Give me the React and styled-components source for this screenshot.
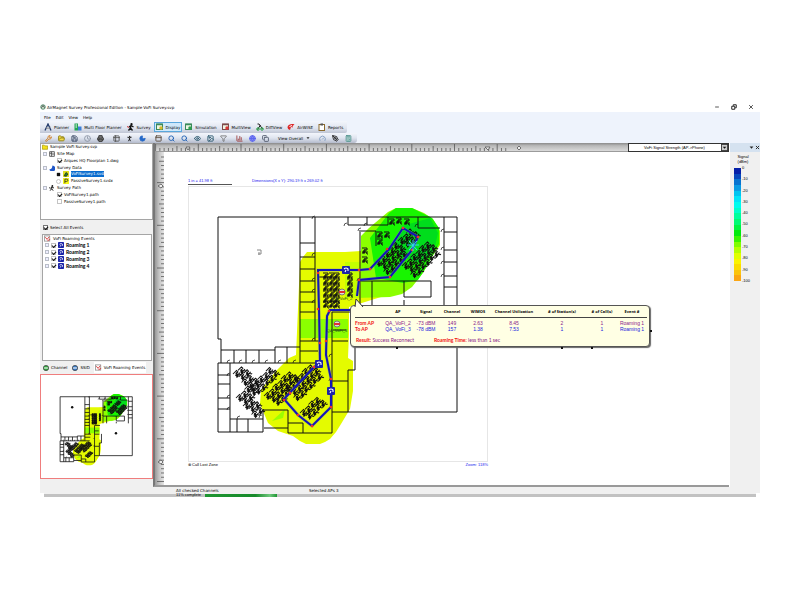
import React from 'react';
import styled, { createGlobalStyle } from 'styled-components';
import {
    Wrench, FolderOpen, Save, Clock, Printer, Table2, PersonStanding, Moon, PanelTop,
    Search, Eye, Image, Filter, BarChart3, Globe, Copy, Gauge, PenTool, Calculator
} from 'lucide-react';

const GlobalStyle = createGlobalStyle`
    body {
        margin: 0;
        background: #fff;
        font-family: 'DejaVu Sans', sans-serif;
        font-size: 4px;
        line-height: 7px;
        color: #000;
    }
    * {
        box-sizing: border-box;
    }
    button, select, input {
        font: inherit;
        color: inherit;
        margin: 0;
        padding: 0;
    }
`;

const Page = styled.main`
    padding: 100px 40px 20px;
`;

const AppWindow = styled.div`
    display: flex;
    flex-direction: column;
    background: #fff;
`;

const TitleBar = styled.header`
    display: flex;
    align-items: center;
    height: 12px;
    padding: 2px 6px 0 0;
    gap: 1px;
`;

const Title = styled.h1`
    margin: 0;
    font-size: 4px;
    font-weight: 400;
    flex: 1;
`;

const WindowButtons = styled.div`
    display: flex;
    gap: 11px;
`;

const PlainButton = styled.button`
    display: flex;
    align-items: center;
    justify-content: center;
    border: none;
    background: none;
    height: 6px;
    min-width: 6px;
`;

const Ribbon = styled.div`
    background: #eef3fc;
    height: 31px;
`;

const MenuBar = styled.nav`
    display: flex;
    align-items: center;
    height: 9px;
    padding: 1px 0 0 4px;
    gap: 5px;
`;

const TabBar = styled.div`
    display: flex;
    align-items: center;
    width: fit-content;
    height: 12px;
    padding: 1px 2px;
    gap: 1px;
    background: linear-gradient(#f3f6fc, #dfe4ef 60%, #bfc5d4);
    border-radius: 0 0 2px 0;
`;

const Tab = styled.button`
    display: flex;
    align-items: center;
    gap: 2px;
    height: 10px;
    padding: 0 1px;
    white-space: nowrap;
    border: 1px solid ${props => props.$active ? '#5aa7dc' : 'transparent'};
    background: ${props => props.$active ? '#cfe8fa' : 'none'};
`;

const ToolBar = styled.div`
    display: flex;
    align-items: center;
    width: fit-content;
    height: 10px;
    padding: 0 5px;
    gap: 9px;
    background: linear-gradient(#f3f6fc, #dfe4ef 50%, #b4bbcc);
    border-radius: 0 0 3px 0;
`;

const ToolGroup = styled.div`
    display: flex;
    gap: 6px;
`;

const Tool = styled.button`
    display: flex;
    align-items: center;
    gap: 3px;
    height: 8px;
    min-width: 7px;
    border: none;
    background: none;
    white-space: nowrap;
`;

const Body = styled.div`
    display: grid;
    grid-template-columns: 113px 1fr 31px;
`;

const Sidebar = styled.aside`
    display: flex;
    flex-direction: column;
    background: #f0f0f0;
`;

const TreePanel = styled.section`
    height: ${props => props.$height};
    margin: ${props => props.$margin || '0'};
    padding: 0 1px;
    background: #fff;
    border: 1px solid #a5a5a5;
`;

const TreeRows = styled.ul`
    list-style: none;
    margin: 0;
    padding: 0;
    display: grid;
    grid-auto-rows: 1fr;
    height: ${props => props.$height};
`;

const TreeRow = styled.li`
    display: flex;
    align-items: center;
    gap: 2px;
    padding-left: ${props => props.$indent}px;
    font-weight: ${props => props.$bold ? 700 : 400};
    font-family: ${props => props.$bold ? "'Lato', sans-serif" : 'inherit'};
    font-size: ${props => props.$bold ? 5 : 4}px;
    line-height: 6px;
    white-space: nowrap;
`;

const Label = styled.label`
    display: flex;
    align-items: center;
    gap: 2px;
`;

const Name = styled.span`
    background: ${props => props.$selected ? '#0a6cce' : 'none'};
    color: ${props => props.$selected ? '#fff' : 'inherit'};
`;

const Check = styled.input`
    appearance: none;
    width: 5px;
    height: 5px;
    border: 1px solid ${props => props.$boxed ? '#777' : '#c4c4c4'};
    border-radius: ${props => props.type === 'radio' ? '50%' : '0'};
    background: #fff;
    display: grid;
    place-items: center;

    &:checked::after {
        content: '';
        width: 3px;
        height: 2px;
        border-left: 1px solid #111;
        border-bottom: 1px solid #111;
        transform: rotate(-45deg);
    }
    &[type='radio']:checked::after {
        border: none;
        width: 3px;
        height: 3px;
        background: #111;
        transform: none;
    }
`;

const Expander = styled.i`
    width: 4px;
    height: 4px;
    border: 1px solid #b9bec8;
    background: #eef;
`;

const SelectAll = styled.div`
    display: flex;
    align-items: center;
    height: 14px;
    padding-left: 3px;
`;

const EventTabs = styled.div`
    display: flex;
    align-items: center;
    height: 13px;
    padding-left: 2px;
    gap: 3px;
`;

const EventTab = styled.button`
    display: flex;
    align-items: center;
    gap: 2px;
    height: 11px;
    padding: 0 1px;
    border: none;
    background: ${props => props.$active ? '#fff' : 'none'};
    white-space: nowrap;
`;

const MiniMap = styled.div`
    height: 105px;
    margin-bottom: 8px;
    border: 1px solid #ef7d7d;
    background: #fff;

    svg {
        display: block;
        width: 100%;
        height: 100%;
    }
`;

const Workspace = styled.section`
    display: grid;
    grid-template-columns: 9px 1fr;
    grid-template-rows: 9px 1fr;
    border-left: 2px solid #777;
    border-bottom: 2px solid #999;
    background: #fff;
    min-width: 0;
`;

const TopRuler = styled.div`
    grid-column: 1 / 3;
    display: flex;
    justify-content: space-between;
    background: linear-gradient(#8a8a8a, #b8b8b8 30%, #d8d8d8 85%, #777);
    overflow: hidden;

    svg {
        display: block;
        flex: none;
    }
`;

const SideRuler = styled.div`
    background: linear-gradient(90deg, #999, #c4c4c4 45%, #e6e6e6);
    overflow: hidden;

    svg {
        display: block;
    }
`;

const MetricSelect = styled.select`
    appearance: none;
    width: 101px;
    height: 9px;
    padding-right: 8px;
    border: 1px solid #333;
    border-radius: 0;
    background: #fff;
    font-family: 'Liberation Sans', sans-serif;
    font-size: 4px;
    text-align: center;
    text-align-last: center;
`;

const SelectBox = styled.div`
    position: relative;
    display: flex;

    svg {
        position: absolute;
        right: 1px;
        top: 1px;
        pointer-events: none;
    }
`;

const MapArea = styled.div`
    padding: 25px 24px 16px;
    min-width: 0;
    font-family: 'Liberation Sans', sans-serif;
    font-size: 4px;
`;

const MapFrame = styled.div`
    position: relative;
    width: 300px;
`;

const MapHead = styled.div`
    display: flex;
    height: 9px;
    line-height: 8px;
    color: #2222ee;
`;

const Scale = styled.div`
    width: 44px;
    height: 8px;
    border-bottom: 1px solid #555;
    margin-right: 20px;
    white-space: nowrap;
`;

const Sheet = styled.div`
    border: 1px solid #e6e6e6;

    svg {
        display: block;
        width: 100%;
    }
`;

const MapFoot = styled.div`
    display: flex;
    justify-content: space-between;
    line-height: 6px;
`;

const Zoom = styled.span`
    color: #2222ee;
`;

const Tooltip = styled.div`
    position: absolute;
    left: 162px;
    top: 128px;
    width: 300px;
    height: 42px;
    padding: 2px 4px 0;
    border: 1px solid #555;
    border-radius: 4px;
    background: #ffffe4;
    box-shadow: 1px 1px 1px #666;
    font-family: 'Liberation Sans', sans-serif;
    font-size: 5px;
`;

const TooltipTail = styled.svg`
    position: absolute;
    left: 2px;
    top: -8px;
`;

const Handle = styled.i`
    position: absolute;
    left: ${props => props.$x};
    top: ${props => props.$y};
    width: 2px;
    height: 2px;
    background: #111;
`;

const EventTable = styled.table`
    width: 100%;
    table-layout: fixed;
    border-collapse: collapse;

    th, td {
        padding: 0;
        line-height: 6px;
        text-align: center;
        white-space: nowrap;
    }
    thead th {
        height: 9px;
        border-bottom: 1px solid #444;
        font-family: 'Open Sans', sans-serif;
        font-size: 4px;
    }
    tbody tr:first-child > * {
        padding-top: 2px;
    }
    tbody th {
        text-align: left;
        color: #f01010;
        font-family: 'Lato', sans-serif;
    }
`;

const ApRow = styled.tr`
    color: ${props => props.$color};
`;

const Result = styled.p`
    display: flex;
    gap: 20px;
    margin: 5px 0 0 1px;
    color: #8a1c8a;
    font-family: 'Lato', sans-serif;

    b {
        color: #f01010;
    }
`;

const LegendPanel = styled.aside`
    background: #f0f0f0;
    margin-left: 1px;
`;

const LegendHead = styled.div`
    display: flex;
    justify-content: flex-end;
    align-items: center;
    height: 9px;
    background: #d5e2f0;
`;

const LegendTitle = styled.div`
    padding: 2px 4px 0 0;
    text-align: center;
    line-height: 5px;
    font-family: 'Liberation Sans', sans-serif;
`;

const Legend = styled.div`
    display: flex;
    gap: 1px;
    padding: 1px 0 0 4px;
    font-family: 'Liberation Sans', sans-serif;
`;

const Swatches = styled.div`
    display: flex;
    flex-direction: column;
    width: 7px;
    height: 113px;
    margin-top: 3px;
`;

const Swatch = styled.i`
    flex: 1;
    background: ${props => props.$color};
`;

const LegendLabels = styled.div`
    display: flex;
    flex-direction: column;
    justify-content: space-between;
    height: 119px;
    line-height: 6px;
`;

const StatusBar = styled.footer`
    display: flex;
    height: 6px;
    padding-left: 136px;
    background: #f0f0f0;
`;

const StatusCell = styled.span`
    width: 133px;
    white-space: nowrap;
`;

const ProgressRow = styled.div`
    display: flex;
    align-items: flex-end;
    height: 4px;
    margin: 0 4px;
    padding-left: 132px;
    background: linear-gradient(#f0f0f0 25%, #c2c2c2 25%);
    font-family: 'Liberation Sans', sans-serif;
`;

const ProgressText = styled.span`
    width: 29px;
    line-height: 4px;
    white-space: nowrap;
`;

const Progress = styled.div`
    width: 72px;
    height: 3px;
    background: linear-gradient(90deg, #1e9632, #178a2b 70%, #6fc77d 90%, #1e9632);
`;

/* small glyphs, drawn on a 16 unit grid */
const Glyph = ({ size = 8, children }) => (
    <svg width={size} height={size} viewBox="0 0 16 16" fill="none" strokeWidth="2">{children}</svg>
);

const Walker = ({ size, accent = '#111' }) => (
    <Glyph size={size}>
        <circle cx="9" cy="2.5" r="2.3" fill="#111" />
        <path d="M8 5l-1 5 4 5M7 10l-4 5M4 8l4-3 5 3" stroke="#111" strokeWidth="2.6" />
        <path d="M1 6l2 4" stroke={accent} />
    </Glyph>
);

const WindowGlyph = ({ color, inner }) => (
    <Glyph>
        <rect x="1" y="2" width="12" height="11" fill="#eef6e4" stroke={color} />
        <path d="M1 3h12" stroke={color} strokeWidth="3" />
        <circle cx="10" cy="10" r="3.5" fill={inner} />
    </Glyph>
);

const tabIcons = {
    Planner: (
        <Glyph>
            <path d="M2 15L8 2l6 13" stroke="#223a6a" strokeWidth="2.6" />
            <path d="M4 9a6 6 0 0 0 9-1" stroke="#888" />
        </Glyph>
    ),
    'Multi Floor Planner': (
        <Glyph>
            <rect x="1" y="1" width="7" height="14" fill="#23a455" />
            <rect x="8" y="7" width="7" height="8" fill="#3d7fd6" />
            <path d="M3 4h3M3 8h3" stroke="#fff" />
        </Glyph>
    ),
    Survey: <Walker size={8} accent="#c33" />,
    Display: <WindowGlyph color="#3a8a5b" inner="#d9b928" />,
    Simulation: <WindowGlyph color="#3a8a5b" inner="#2ba14c" />,
    MultiView: <WindowGlyph color="#7d4a4a" inner="#d93636" />,
    DiffView: (
        <Glyph>
            <path d="M3 2l3 0 7 10M3 13L9 4" stroke="#222" />
            <circle cx="4" cy="12" r="2.5" stroke="#23a043" />
            <circle cx="12" cy="12" r="2.5" stroke="#23a043" />
        </Glyph>
    ),
    AirWISE: (
        <Glyph>
            <path d="M1 8c2-6 9-7 14-5l-4 3 1 3-4-1-2 6C3 13 1 11 1 8z" fill="#dc2626" />
            <path d="M5 7l5-2" stroke="#fff" />
        </Glyph>
    ),
    Reports: (
        <Glyph>
            <rect x="2" y="3" width="11" height="12" fill="#fff" stroke="#8b6a2d" />
            <rect x="5" y="1" width="5" height="4" fill="#555" />
        </Glyph>
    )
};

const toolGroups = [
    [
        ['Configure', Wrench, '#d07818'],
        ['Open', FolderOpen, '#8a7a10', '#f2dc4a'],
        ['Save', Save, '#3c4a66'],
        ['History', Clock, '#8a93a3'],
        ['Print', Printer, '#333', '#777']
    ],
    [
        ['Table', Table2, '#555'],
        ['Walk', PersonStanding, '#111'],
        ['Signal', Moon, '#2468c8', '#2468c8']
    ],
    [
        ['Layout', PanelTop, '#5a4a3a'],
        ['Zoom in', Search, '#1d5fb4'],
        ['Zoom out', Search, '#1d5fb4'],
        ['View', Eye, '#27566b'],
        ['Picture', Image, '#27566b'],
        ['Filter', Filter, '#777']
    ],
    [
        ['Chart', BarChart3, '#a04040'],
        ['Globe', Globe, '#5a64ee', '#8a92f4'],
        ['Copy', Copy, '#555e70']
    ]
];

const lastTools = [
    ['Gauge', Gauge, '#7f9cc0'],
    ['Draw', PenTool, '#222'],
    ['Calculator', Calculator, '#4c8f8a', '#dff0ee']
];

const ToolButton = ({ tool: [name, Icon, color, fill = 'none'] }) => (
    <Tool aria-label={name}>
        <Icon size={7} color={color} fill={fill} strokeWidth={3} />
    </Tool>
);

const PhoneGlyph = ({ x, y, size = 8 }) => (
    <g transform={`translate(${x - size / 2} ${y - size / 2}) scale(${size / 8})`}>
        <rect width="8" height="8" rx="1" fill="#1c24a8" />
        <path d="M2 3q2-2 4 0v2M3 6l1-2" stroke="#fff" strokeWidth="1.1" fill="none" />
    </g>
);

const EventIcon = () => (
    <svg width="6" height="6" viewBox="0 0 8 8"><PhoneGlyph x={4} y={4} /></svg>
);

const RoamingIcon = () => (
    <Glyph size={7}>
        <rect x="1" y="2" width="12" height="12" fill="#fff" stroke="#999" />
        <path d="M3 5l4 5 5-6M8 13l6-3" stroke="#d42a2a" />
    </Glyph>
);

const DiscIcon = ({ color }) => (
    <Glyph size={6}>
        <circle cx="8" cy="8" r="7" fill={color} stroke="#444" />
        <path d="M3 8h10" stroke="#fff" strokeWidth="3" />
    </Glyph>
);

const folderIcon = (
    <Glyph size={6}><path d="M1 3h5l2 2h7v9H1z" fill="#f4e11a" stroke="#a99a10" /></Glyph>
);
const mapIcon = (
    <Glyph size={6}>
        <rect x="2" y="2" width="12" height="12" fill="#fff" stroke="#333" />
        <path d="M7 2v12M7 8h7M2 6h5" stroke="#333" />
    </Glyph>
);
const dataIcon = (
    <Glyph size={6}><path d="M9 1a8 8 0 1 1-8 10c5 1 8-4 8-10z" fill="#1e56c8" /></Glyph>
);
const activeIcon = (
    <Glyph size={6}>
        <rect width="16" height="16" fill="#dede20" />
        <path d="M3 13l5-9 5 4-4 6z" fill="#1c8c2a" stroke="#222" />
    </Glyph>
);
const passiveIcon = (
    <Glyph size={6}>
        <rect width="16" height="16" fill="#f5f51a" />
        <path d="M5 14V3h5a3 3 0 0 1 0 6H5" stroke="#222" />
    </Glyph>
);

const treeItems = [
    { name: 'Sample VoFi Survey.svp', indent: 0, icon: folderIcon },
    { name: 'Site Map', indent: 1, icon: mapIcon, parent: true },
    { name: 'Arques HQ Floorplan 1.dwg', indent: 15, type: 'checkbox', checked: true },
    { name: 'Survey Data', indent: 1, icon: dataIcon, parent: true },
    { name: 'VoFiSurvey1.svd', indent: 14, type: 'radio', checked: true, icon: activeIcon, selected: true },
    { name: 'PassiveSurvey1.svdx', indent: 14, type: 'radio', icon: passiveIcon },
    { name: 'Survey Path', indent: 1, icon: <Walker size={6} />, parent: true },
    { name: 'VoFiSurvey1.path', indent: 15, type: 'checkbox', checked: true },
    { name: 'PassiveSurvey1.path', indent: 15, type: 'checkbox' }
];

const TreeItem = ({ item }) => (
    <TreeRow $indent={item.indent}>
        {item.parent && <Expander />}
        <Label as={item.type ? 'label' : 'span'}>
            {item.type && <Check type={item.type} name={item.type === 'radio' ? 'survey' : undefined} defaultChecked={item.checked} />}
            {item.icon}
            <Name $selected={item.selected}>{item.name}</Name>
        </Label>
    </TreeRow>
);

/* floor plan drawing */
const walls = `
M218 217H457V412H332M218 217V339H221V363M300 217V363M315 217V341M332 312V433H288V410H263M218 363V432H263V409
M300 243H315M300 257H315M300 269H315M300 281H315M300 292H315M300 302H315M300 312H315M300 341H320M300 351H318
M348 217V225H388V217M367 217V225M418 217V228H440M444 217V297M444 232H457M444 250H457M444 262H457M444 276H457M444 287H457
M221 350H275V347H300M234 350V363M246 350V363M259 350V363M275 350V363M287 347V363M218 363H316
M230 363V419H263M218 375H230M218 384H230M218 398H230M218 409H230M230 419V432M237 419V432M248 419V432
M264 428H288M288 423H303V433M360 230V281H404M361 231H376V246M372 281V305M360 281V305M404 281H431V297H404V281
M332 312H350M332 341H348M332 381H348V412M348 381V370H355V340M318 277H330M333 330H346M404 300V305M444 297V305`;

const doors = [
    [315, 219], [315, 256], [315, 281], [315, 292], [315, 303], [315, 341], [332, 357], [332, 381], [230, 363],
    [242, 363], [255, 363], [268, 363], [281, 363], [296, 363], [230, 376], [230, 398], [230, 410], [262, 418],
    [444, 232], [444, 250], [444, 264], [444, 277], [347, 226], [367, 226], [418, 227], [361, 231], [360, 281], [240, 419]
];

const clusters = [
    { x: 236, y: 398, cols: 3, rows: 2 },
    { x: 233, y: 374, cols: 2, rows: 4 },
    { x: 249, y: 388, cols: 5, rows: 2 },
    { x: 243, y: 406, cols: 2, rows: 3 },
    { x: 264, y: 396, cols: 6, rows: 2 },
    { x: 274, y: 402, cols: 3, rows: 1 },
    { x: 285, y: 389, cols: 6, rows: 3 },
    { x: 300, y: 413, cols: 4, rows: 2 },
    { x: 375, y: 263, cols: 5, rows: 3 },
    { x: 402, y: 266, cols: 6, rows: 3 },
    { x: 398, y: 241, cols: 3, rows: 2 }
];

const Desk = ({ x, y }) => (
    <path
        transform={`translate(${x} ${y})`}
        d="M0 0h5v2h-3v3M1 3l2 1-2 1zM3 1v3h3M4 4l1 2h1M0 5h3"
    />
);

const Cluster = ({ x, y, cols, rows }) => {
    const desks = [];
    for (let r = 0; r < rows; r++) {
        for (let c = 0; c < cols; c++) {
            desks.push(<Desk key={`${r}-${c}`} x={c * 6 + (r % 2) * 2} y={r * 6 + (c % 2)} />);
        }
    }
    return <g transform={`translate(${x} ${y}) rotate(-45)`}>{desks}</g>;
};

const FloorPlan = ({ stroke = 1 }) => (
    <g>
        <path d="M300 262l3-5 4-5h38l16-1 16 30 4 16-32 10v27l-1 24 5 3v30l-3 18-9 15-5 8-6 7-5 3-5 2h-14l-6-3-7-5-15-5-10-8-8-19 1-14 14-18 14-14 7-3z" fill="#e4fb00" />
        <path d="M361 236l8-8 19-16 8-4h16l12 5 9 6 7 12v14l-8 12-9 16-11 14-10 7-12 3-34 1v-32l5-2z" fill="#8bff00" />
        <path d="M300 319h48v19h-48z" fill="#8bff00" />
        <path d="M389 213l7-5h16l20 10 7 10v16l-12 22-9 14-15 3-27-5-6-40z" fill="#18f500" />
        <path d="M402 226l28-8 8 15-4 18-14 12-18-6-8-14z" fill="#00dd1c" />
        <path d="M345 262h16v36h-16z" fill="#c4ff00" />
        <path d="M272 421l13-12-2 9z" fill="#9dff00" />
        <g fill="none" stroke="#111" strokeWidth={stroke}>
            <path d={walls} />
            {doors.map(([x, y]) => <path key={`${x}-${y}`} d={`M${x - 3} ${y}q0-3 3-3`} strokeWidth={stroke * 0.7} />)}
            <g strokeWidth={stroke}>
                {clusters.map(c => <Cluster key={`${c.x}-${c.y}`} {...c} />)}
                {[273, 279, 285, 291, 297, 302].map(y => (
                    <g key={y}>
                        <Desk x={323} y={y} />
                        <Desk x={329} y={y} />
                        <Desk x={334} y={y} />
                        {y < 294 && <Desk x={347} y={y} />}
                    </g>
                ))}
                {[[362, 248], [362, 257], [377, 232], [384, 232], [377, 239], [389, 219], [396, 218], [404, 219]].map(([x, y]) => (
                    <Desk key={`${x}-${y}`} x={x} y={y} />
                ))}
            </g>
        </g>
    </g>
);

const route = 'M357 296L359 280L390 277L412 250L418 237L403 228L389 249L370 269L360 270H318L319 309L320 363L314 367L284 399L298 415L312 426L331 407V379L326 355L327 316L330 310H350';

const routePoints = [
    [359, 280], [390, 277], [412, 250], [418, 237], [403, 228], [387, 249], [370, 269], [359, 270], [318, 273], [318, 309],
    [314, 367], [284, 400], [298, 415], [312, 426], [331, 407], [331, 379], [326, 341], [329, 311], [320, 343], [290, 393]
];

const AccessPoint = ({ x, y, name }) => (
    <g>
        <circle cx={x} cy={y} r="3" fill="#ddd" stroke="#777" />
        <path d={`M${x - 3} ${y}h6`} stroke="#e03030" strokeWidth="2" />
        <text x={x} y={y + 8} fontSize="4" textAnchor="middle" fill="#234a23">{name}</text>
    </g>
);

const SurveyMap = () => (
    <svg viewBox="189 187 298 274" role="img" aria-label="Signal map">
        <FloorPlan />
        <g fill="none">
            <path d={route} stroke="#8a8a9a" strokeWidth="3" opacity=".5" />
            <path d={route} stroke="#1216b8" strokeWidth="2" />
        </g>
        {routePoints.map(([x, y]) => <circle key={`${x}-${y}`} cx={x} cy={y} r="1.3" fill="#f0302a" />)}
        <AccessPoint x={342} y={292} name="QA_VoFi_2" />
        <AccessPoint x={337} y={324} name="QA_VoFi_3" />
        <path d="M413 240v11M407 245h12M409 241l8 9M417 241l-8 9" stroke="#30e0e8" />
        <path d="M257 250h4v4h-3M259 252v3" stroke="#888" fill="none" />
        <PhoneGlyph x={346} y={270} />
        <PhoneGlyph x={319} y={364} />
        <PhoneGlyph x={331} y={391} />
    </svg>
);

const TICK = 4.27;

const RulerTop = () => (
    <svg width="366" height="9" viewBox="155 143 366 9">
        {Array.from({ length: 83 }, (_, i) => {
            const h = i % 10 === 0 ? 7 : i % 5 === 0 ? 5 : 3;
            return <path key={i} d={`M${165 - 9.4 + i * TICK} 151v-${h}`} stroke="#555" strokeWidth=".8" />;
        })}
        <path d="M186 147h4l-2 3zM485 147h5l-2 3zM517 148l2-2 2 2-2 2z" fill="#eee" stroke="#555" strokeWidth=".8" />
    </svg>
);

const RulerSide = () => (
    <svg width="9" height="332" viewBox="155 152 9 332">
        {Array.from({ length: 77 }, (_, i) => {
            const w = i % 10 === 6 ? 7 : i % 5 === 1 ? 5 : 3;
            return <path key={i} d={`M164 ${157 + i * TICK}h-${w}`} stroke="#555" strokeWidth=".8" />;
        })}
        <path d="M158 186l3-2 2 2-2 2zM158 462l3-2 2 2-2 2z" fill="#eee" stroke="#555" strokeWidth=".8" />
    </svg>
);

const columns = [
    ['', 28], ['AP', 30], ['Signal', 26], ['Channel', 26], ['WIMOS', 26],
    ['Channel Utilization', 46], ['# of Station(s)', 50], ['# of Call(s)', 30], ['Event #', 30]
];

const apRows = [
    { head: 'From AP', color: '#8a1c8a', cells: ['QA_VoFi_2', '-73 dBM', '149', '2.63', '8.45', '2', '1', 'Roaming 1'] },
    { head: 'To AP', color: '#2222dd', cells: ['QA_VoFi_3', '-78 dBM', '157', '1.38', '7.53', '1', '1', 'Roaming 1'] }
];

const RoamingTooltip = () => (
    <Tooltip>
        <TooltipTail width="12" height="9" viewBox="0 0 12 9">
            <path d="M2 9L3 1l7 8" fill="#ffffe4" stroke="#333" />
        </TooltipTail>
        <EventTable>
            <colgroup>
                {columns.map(([name, width]) => <col key={name} width={width} />)}
            </colgroup>
            <thead>
                <tr>{columns.map(([name]) => <th key={name}>{name}</th>)}</tr>
            </thead>
            <tbody>
                {apRows.map(row => (
                    <ApRow key={row.head} $color={row.color}>
                        <th>{row.head}</th>
                        {row.cells.map((cell, i) => <td key={i}>{cell}</td>)}
                    </ApRow>
                ))}
            </tbody>
        </EventTable>
        <Result>
            <span><b>Result:</b> Success Reconnect</span>
            <span><b>Roaming Time:</b> less than 1 sec</span>
        </Result>
        <Handle $x="45px" $y="41px" />
        <Handle $x="210px" $y="41px" />
        <Handle $x="240px" $y="41px" />
        <Handle $x="299px" $y="24px" />
    </Tooltip>
);

const scaleColors = [
    '#0620a8', '#0648bc', '#0874d0', '#0a9ce4', '#00c4f0', '#00e4f8', '#00fcee', '#00ffca', '#00ff9c', '#00fa74',
    '#00f440', '#00ea0c', '#38f400', '#80fc00', '#b4ff00', '#e0ff00', '#faf400', '#fbdc00', '#fbc40c', '#fba614'
];

const App = () => (
    <Page>
        <GlobalStyle />
        <AppWindow>
            <TitleBar>
                <Glyph size={6}>
                    <circle cx="8" cy="8" r="6" fill="#cfe6d2" stroke="#2c6a4a" />
                    <path d="M4 10l4-6 4 6" stroke="#333" />
                </Glyph>
                <Title>AirMagnet Survey Professional Edition - Sample VoFi Survey.svp</Title>
                <WindowButtons>
                    <PlainButton aria-label="Minimize"><Glyph size={6}><path d="M3 8h10" stroke="#222" /></Glyph></PlainButton>
                    <PlainButton aria-label="Restore">
                        <Glyph size={6}><path d="M2 6h8v8H2zM6 5V2h8v8h-3" stroke="#222" strokeWidth="2.6" /></Glyph>
                    </PlainButton>
                    <PlainButton aria-label="Close"><Glyph size={6}><path d="M3 3l10 10M13 3L3 13" stroke="#222" /></Glyph></PlainButton>
                </WindowButtons>
            </TitleBar>
            <Ribbon>
                <MenuBar>
                    {['File', 'Edit', 'View', 'Help'].map(name => <PlainButton key={name}>{name}</PlainButton>)}
                </MenuBar>
                <TabBar>
                    {Object.keys(tabIcons).map(name => (
                        <Tab key={name} $active={name === 'Display'}>{tabIcons[name]}{name}</Tab>
                    ))}
                </TabBar>
                <ToolBar>
                    {toolGroups.map(group => (
                        <ToolGroup key={group[0][0]}>
                            {group.map(tool => <ToolButton key={tool[0]} tool={tool} />)}
                        </ToolGroup>
                    ))}
                    <Tool>View Overall<Glyph size={4}><path d="M2 5h12l-6 7z" fill="#222" /></Glyph></Tool>
                    <ToolGroup>
                        {lastTools.map(tool => <ToolButton key={tool[0]} tool={tool} />)}
                    </ToolGroup>
                </ToolBar>
            </Ribbon>
            <Body>
                <Sidebar>
                    <TreePanel $height="77px">
                        <TreeRows $height="61px">
                            {treeItems.map(item => <TreeItem key={item.name} item={item} />)}
                        </TreeRows>
                    </TreePanel>
                    <SelectAll>
                        <Label><Check type="checkbox" $boxed defaultChecked />Select All Events</Label>
                    </SelectAll>
                    <TreePanel $height="127px" $margin="0 1px 0 2px">
                        <TreeRows $height="34px">
                            <TreeRow $indent={0}><RoamingIcon />VoFi Roaming Events</TreeRow>
                            {[1, 2, 3, 4].map(n => (
                                <TreeRow key={n} $indent={1} $bold>
                                    <Expander />
                                    <Label><Check type="checkbox" defaultChecked /><EventIcon />Roaming {n}</Label>
                                </TreeRow>
                            ))}
                        </TreeRows>
                    </TreePanel>
                    <EventTabs>
                        <EventTab><DiscIcon color="#2fa83c" />Channel</EventTab>
                        <EventTab><DiscIcon color="#3478c8" />SSID</EventTab>
                        <EventTab $active><RoamingIcon />VoFi Roaming Events</EventTab>
                    </EventTabs>
                    <MiniMap>
                        <svg viewBox="155 145 367 341" role="img" aria-label="Overview">
                            <FloorPlan stroke={2.6} />
                            <circle cx="258" cy="252" r="4" fill="#111" />
                            <circle cx="403" cy="338" r="4" fill="#111" />
                        </svg>
                    </MiniMap>
                </Sidebar>
                <Workspace>
                    <TopRuler>
                        <RulerTop />
                        <SelectBox>
                            <MetricSelect aria-label="Metric" defaultValue="signal">
                                <option value="signal">VoFi Signal Strength (AP-&gt;Phone)</option>
                            </MetricSelect>
                            <Glyph size={7}>
                                <rect x="1" y="1" width="14" height="14" fill="#ccc" stroke="#333" />
                                <path d="M4 6h8l-4 5z" fill="#111" />
                            </Glyph>
                        </SelectBox>
                    </TopRuler>
                    <SideRuler><RulerSide /></SideRuler>
                    <MapArea>
                        <MapFrame>
                            <MapHead>
                                <Scale>1 in = 41.98 ft</Scale>
                                <span>Dimensions(X x Y): 290.19 ft x 269.02 ft</span>
                            </MapHead>
                            <Sheet><SurveyMap /></Sheet>
                            <MapFoot>
                                <span>⊗ Call Lost Zone</span>
                                <Zoom>Zoom: 118%</Zoom>
                            </MapFoot>
                            <RoamingTooltip />
                        </MapFrame>
                    </MapArea>
                </Workspace>
                <LegendPanel>
                    <LegendHead>
                        <PlainButton aria-label="Options"><Glyph size={5}><path d="M2 5h12l-6 7z" fill="#222" /></Glyph></PlainButton>
                        <PlainButton aria-label="Close legend"><Glyph size={5}><path d="M3 3l10 10M13 3L3 13" stroke="#222" strokeWidth="3" /></Glyph></PlainButton>
                    </LegendHead>
                    <LegendTitle>Signal<br />(dBm)</LegendTitle>
                    <Legend>
                        <Swatches>
                            {scaleColors.map(color => <Swatch key={color} $color={color} />)}
                        </Swatches>
                        <LegendLabels>
                            {Array.from({ length: 11 }, (_, i) => <span key={i}>{i * -10 || 0}</span>)}
                        </LegendLabels>
                    </Legend>
                </LegendPanel>
            </Body>
            <StatusBar>
                <StatusCell>All checked Channels</StatusCell>
                <StatusCell>Selected APs 3</StatusCell>
            </StatusBar>
            <ProgressRow>
                <ProgressText>11% complete</ProgressText>
                <Progress />
            </ProgressRow>
        </AppWindow>
    </Page>
);

export default App;
